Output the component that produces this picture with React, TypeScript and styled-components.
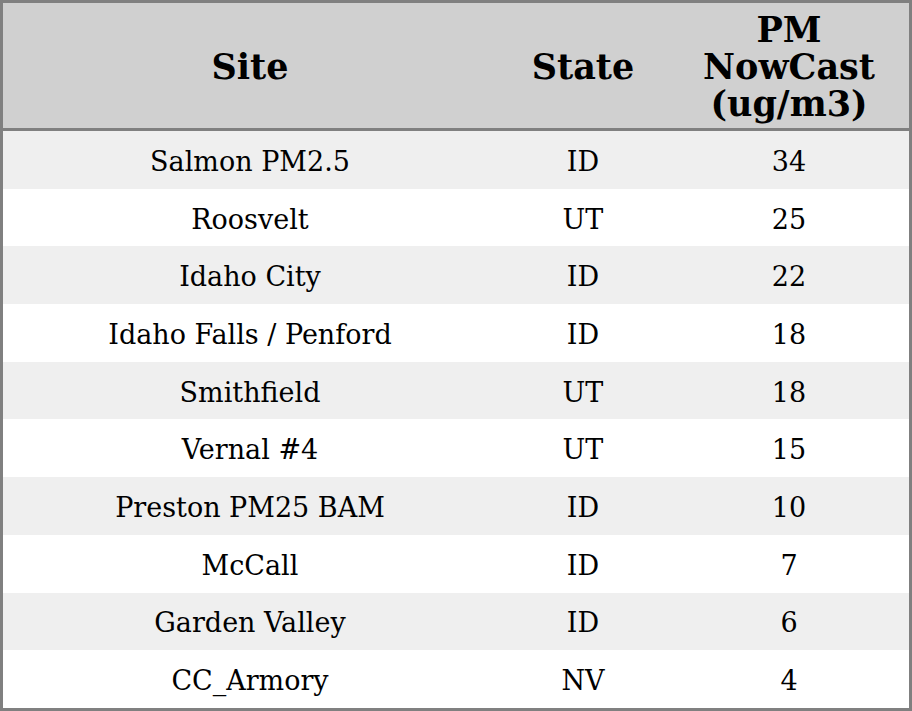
import React from "react";
import styled, { createGlobalStyle } from "styled-components";

const Global = createGlobalStyle`
  html, body { margin: 0; padding: 0; background: #ffffff; }
  body { font-family: "DejaVu Serif", serif; }
`;

const Table = styled.table`
  width: 912px;
  table-layout: fixed;
  border: 3px solid #808080;
  border-spacing: 0;
  border-collapse: separate;
  font-family: "DejaVu Serif", serif;
  color: #000;
`;

const HeadCell = styled.th<{ $w: number }>`
  box-sizing: border-box;
  width: ${(p) => p.$w}px;
  background: #d0d0d0;
  font-size: 35px;
  font-weight: bold;
  line-height: 37px;
  height: 128px;
  padding: 7px 4px 5px;
  border-bottom: 3px solid #808080;
  text-align: center;
  vertical-align: middle;
`;

const Row = styled.tr<{ $shade: boolean }>`
  background: ${(p) => (p.$shade ? "#efefef" : "#ffffff")};
  height: 57.7px;
`;

const Cell = styled.td`
  box-sizing: border-box;
  font-size: 27px;
  line-height: 30px;
  padding: 4px 4px 0;
  text-align: center;
  vertical-align: middle;
  white-space: nowrap;
`;

const rows: [string, string, string][] = [
  ["Salmon PM2.5", "ID", "34"],
  ["Roosvelt", "UT", "25"],
  ["Idaho City", "ID", "22"],
  ["Idaho Falls / Penford", "ID", "18"],
  ["Smithfield", "UT", "18"],
  ["Vernal #4", "UT", "15"],
  ["Preston PM25 BAM", "ID", "10"],
  ["McCall", "ID", "7"],
  ["Garden Valley", "ID", "6"],
  ["CC_Armory", "NV", "4"],
];

export default function App() {
  return (
    <>
      <Global />
      <Table>
        <thead>
          <tr>
            <HeadCell $w={494}>Site</HeadCell>
            <HeadCell $w={172}>State</HeadCell>
            <HeadCell $w={240}>
              PM
              <br />
              NowCast
              <br />
              (ug/m3)
            </HeadCell>
          </tr>
        </thead>
        <tbody>
          {rows.map((r, i) => (
            <Row key={i} $shade={i % 2 === 0}>
              <Cell>{r[0]}</Cell>
              <Cell>{r[1]}</Cell>
              <Cell>{r[2]}</Cell>
            </Row>
          ))}
        </tbody>
      </Table>
    </>
  );
}
